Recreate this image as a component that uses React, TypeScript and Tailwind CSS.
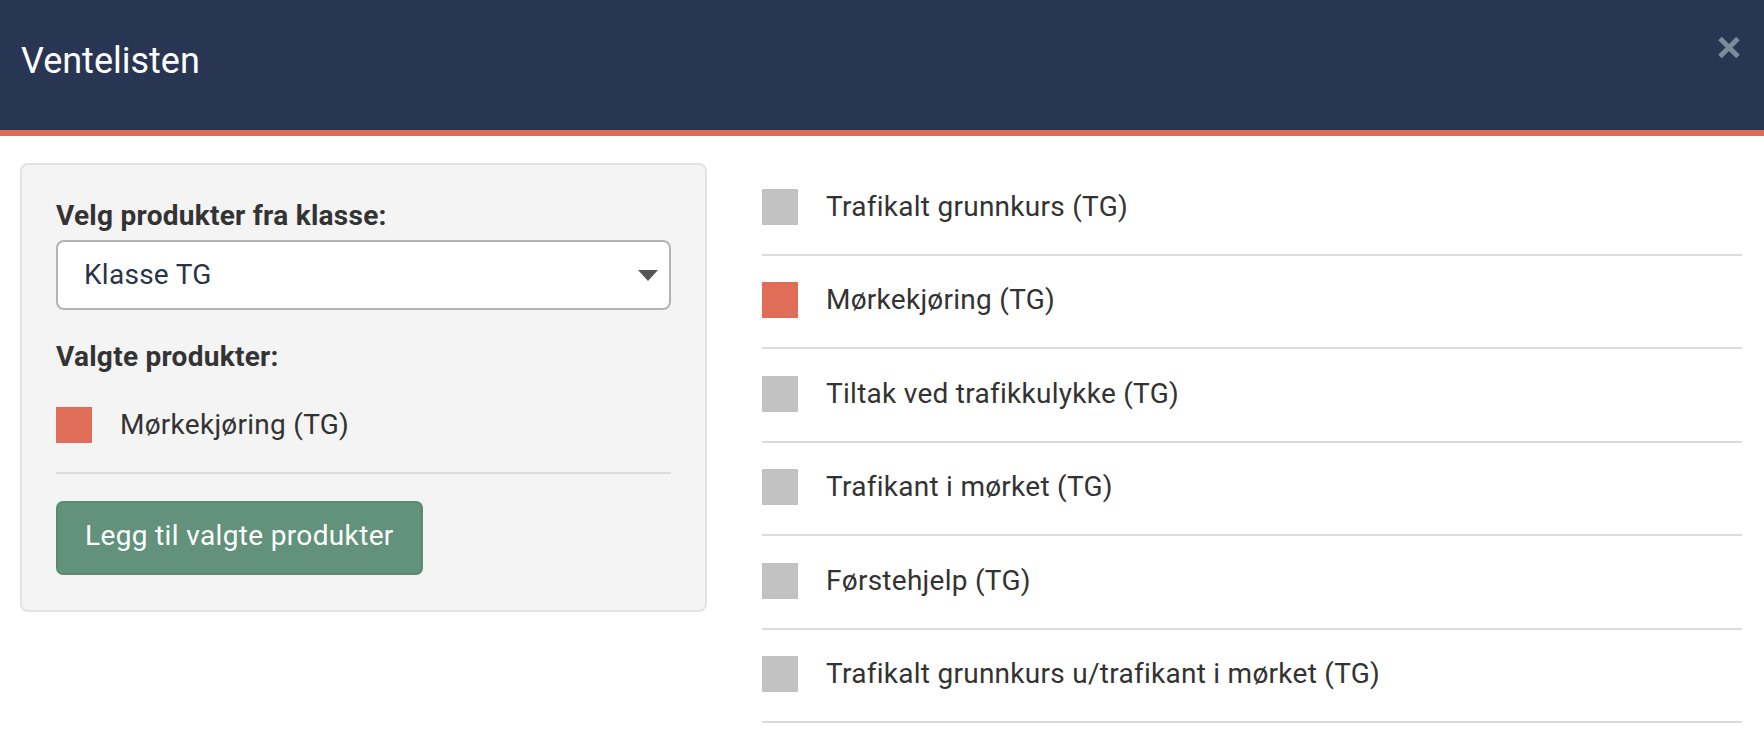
const products = [
  { name: "Trafikalt grunnkurs (TG)", selected: false },
  { name: "Mørkekjøring (TG)", selected: true },
  { name: "Tiltak ved trafikkulykke (TG)", selected: false },
  { name: "Trafikant i mørket (TG)", selected: false },
  { name: "Førstehjelp (TG)", selected: false },
  { name: "Trafikalt grunnkurs u/trafikant i mørket (TG)", selected: false },
]

function CloseIcon() {
  return (
    <svg width="24" height="25" viewBox="0 0 24 25" className="block">
      <path d="M3 3.5 L21 21.5 M21 3.5 L3 21.5" stroke="#7f899c" strokeWidth="5" strokeLinecap="butt" />
    </svg>
  )
}

export default function App() {
  return (
    <div className="min-h-[742px] bg-white font-['Roboto',sans-serif] text-[#333]">
      {/* header */}
      <div className="flex h-[136px] justify-between border-b-[6px] border-[#e06c57] bg-[#283654]">
        <h1 className="flex items-center pb-[8px] pl-[21px] text-[36px] leading-none font-normal text-white">
          Ventelisten
        </h1>
        <div className="mt-[35px] mr-[23px] self-start">
          <CloseIcon />
        </div>
      </div>

      <div className="flex items-start pt-[27px] pl-[20px] tracking-[0.27px]">
        {/* left panel */}
        <div className="w-[687px] rounded-[8px] border-2 border-[#e3e3e3] bg-[#f4f4f4] px-[34px] pt-[31px] pb-[35px]">
          <div className="text-[28px] leading-[40px] font-bold text-[#333]">Velg produkter fra klasse:</div>
          <div className="mt-[4px] flex h-[70px] items-center justify-between rounded-[8px] border-2 border-[#b3b3b3] bg-white pr-[11px] pl-[26px]">
            <span className="text-[28px] text-[#2b3447]">Klasse TG</span>
            <svg width="20" height="11" viewBox="0 0 20 11" className="block">
              <path d="M0 0 L20 0 L10 11 Z" fill="#555" />
            </svg>
          </div>

          <div className="mt-[27px] text-[28px] leading-[40px] font-bold text-[#333]">Valgte produkter:</div>
          <div className="mt-[30px] flex h-[36px] items-center gap-[28px]">
            <span className="h-[36px] w-[36px] bg-[#e06d57]" />
            <span className="text-[28px] text-[#333]">Mørkekjøring (TG)</span>
          </div>

          <div className="mt-[29px] h-[2px] bg-[#dcdcdc]" />

          <button className="mt-[27px] flex h-[74px] items-center rounded-[7px] border-2 border-[#5b8a74] bg-[#63927c] px-[27px] pb-[4px] text-[28px] whitespace-nowrap tracking-[0.35px] text-white">
            Legg til valgte produkter
          </button>
        </div>

        {/* product list */}
        <div className="ml-[55px] w-[980px] -mt-[1px]">
          {products.map((p) => (
            <div key={p.name} className="flex h-[93.5px] items-center gap-[28px] border-b-2 border-[#dcdcdc] pb-[2px]">
              <span className={p.selected ? "h-[36px] w-[36px] bg-[#e06d57]" : "h-[36px] w-[36px] bg-[#c2c2c2]"} />
              <span className="text-[28px] text-[#333]">{p.name}</span>
            </div>
          ))}
        </div>
      </div>
    </div>
  )
}
